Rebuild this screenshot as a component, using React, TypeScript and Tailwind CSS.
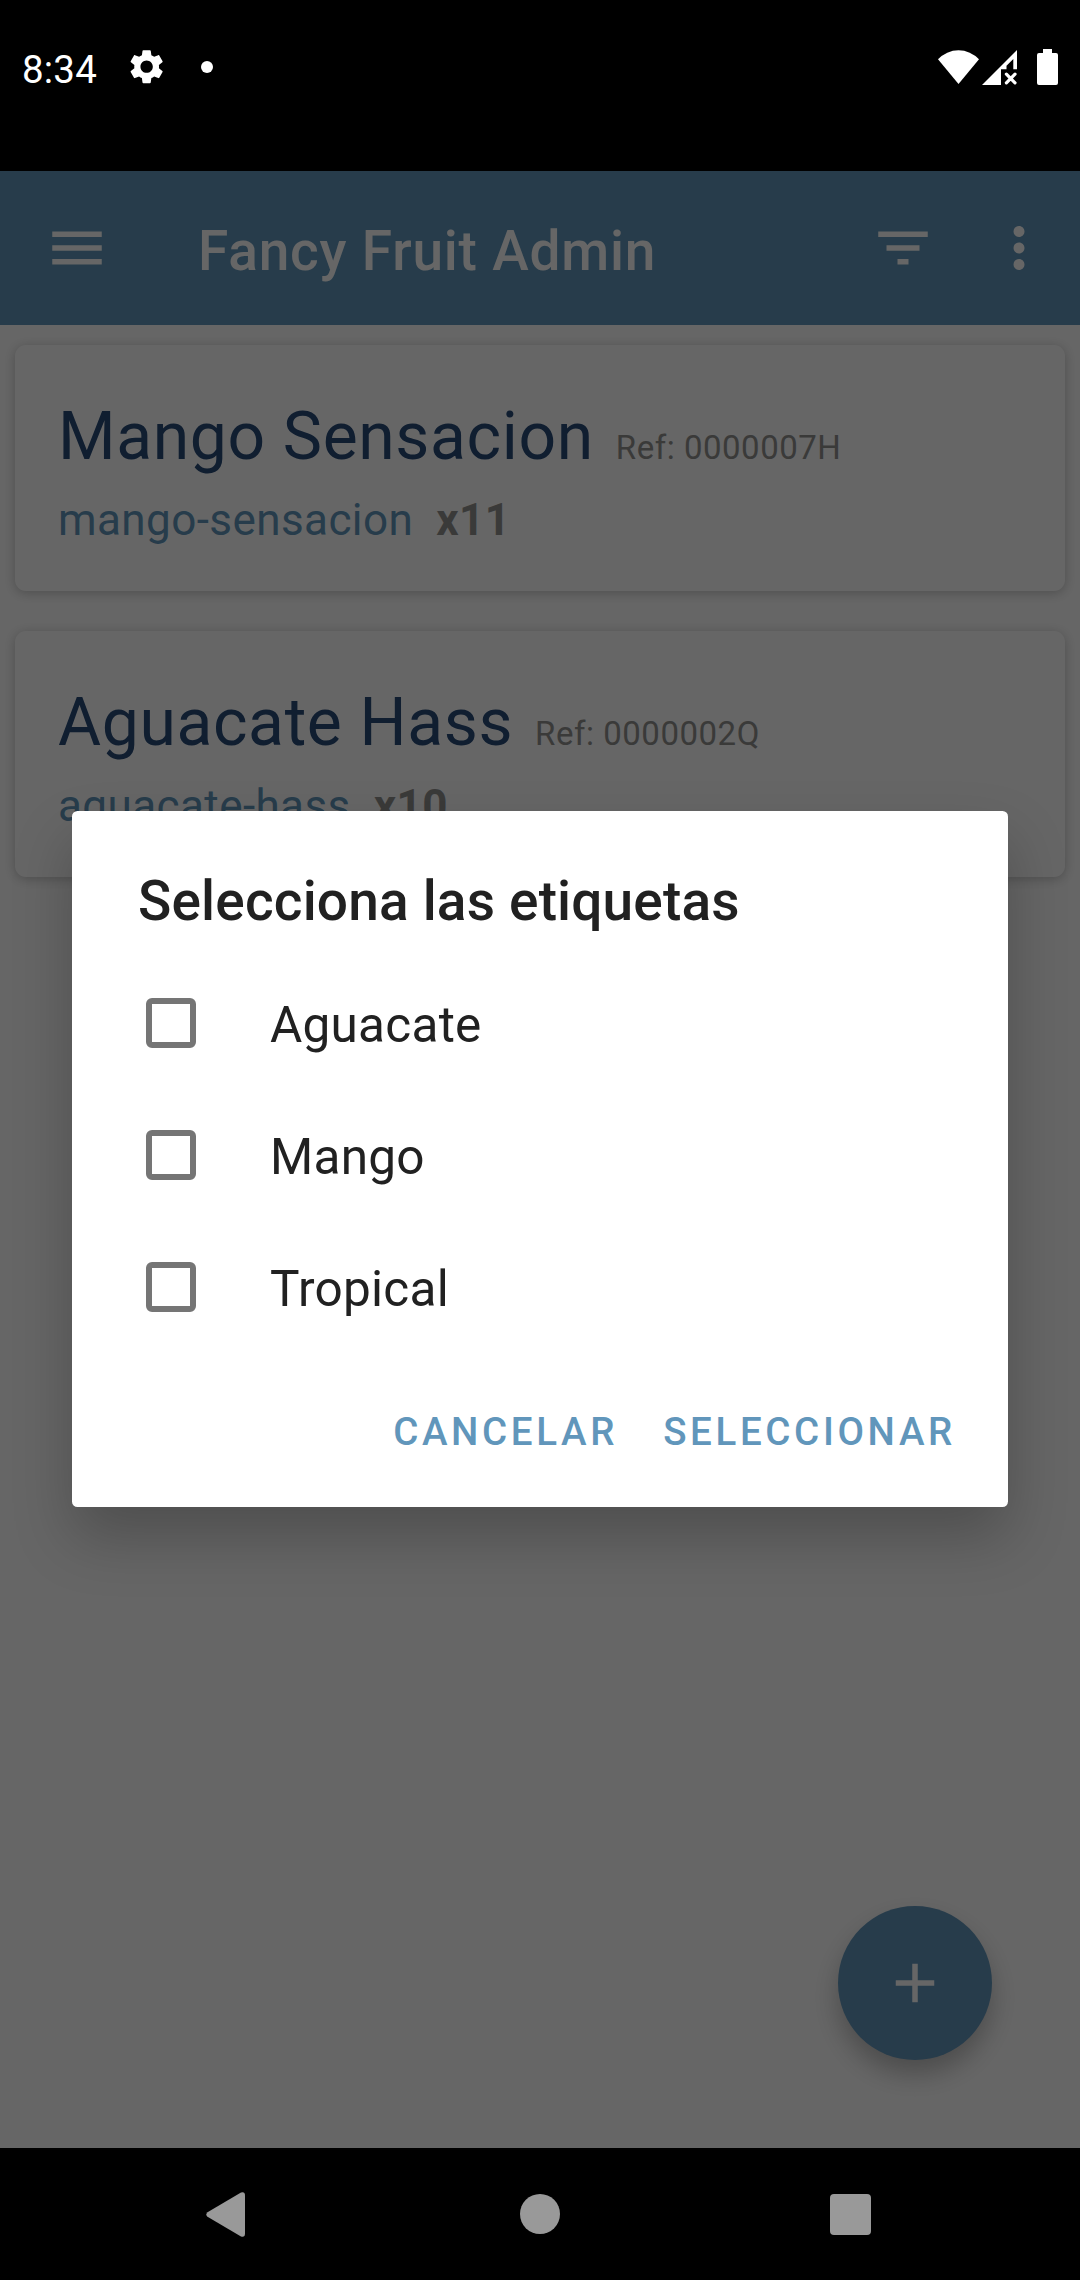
import React from "react";

type Product = { name: string; reference: string; slug: string; quantity: number };

const products: Product[] = [
  { name: "Mango Sensacion", reference: "0000007H", slug: "mango-sensacion", quantity: 11 },
  { name: "Aguacate Hass", reference: "0000002Q", slug: "aguacate-hass", quantity: 10 },
];

const tags = ["Aguacate", "Mango", "Tropical"];

function StatusBar() {
  return (
    <header className="flex h-[171px] shrink-0 items-start justify-between bg-black pr-[22px] pl-[22px] pt-[46px] text-white">
      <div className="flex h-[42px] items-center">
        <span className="mt-[5px] text-[38.5px] leading-[42px] tracking-[0.2px]">8:34</span>
        <svg className="ml-[29px] size-[41.25px]" viewBox="0 0 24 24" fill="currentColor">
          <path d="M19.14 12.94c.04-.3.06-.61.06-.94 0-.32-.02-.64-.07-.94l2.03-1.58c.18-.14.23-.41.12-.61l-1.92-3.32c-.12-.22-.37-.29-.59-.22l-2.39.96c-.5-.38-1.03-.7-1.62-.94l-.36-2.54c-.04-.24-.24-.41-.48-.41h-3.84c-.24 0-.43.17-.47.41l-.36 2.54c-.59.24-1.13.57-1.62.94l-2.39-.96c-.22-.08-.47 0-.59.22L2.74 8.87c-.12.21-.08.47.12.61l2.03 1.58c-.05.3-.09.63-.09.94s.02.64.07.94l-2.03 1.58c-.18.14-.23.41-.12.61l1.92 3.32c.12.22.37.29.59.22l2.39-.96c.5.38 1.03.7 1.62.94l.36 2.54c.05.24.24.41.48.41h3.84c.24 0 .44-.17.47-.41l.36-2.54c.59-.24 1.13-.56 1.62-.94l2.39.96c.22.08.47 0 .59-.22l1.92-3.32c.12-.22.07-.47-.12-.61l-2.01-1.58zM12 15.6c-1.98 0-3.6-1.62-3.6-3.6s1.62-3.6 3.6-3.6 3.6 1.62 3.6 3.6-1.62 3.6-3.6 3.6z" />
        </svg>
        <span className="ml-[34px] size-3 rounded-full bg-white" />
      </div>
      <div className="flex items-end pt-[3px]">
        <svg className="mb-px h-[34px] w-[41px]" viewBox="0 0 41 34" fill="currentColor">
          <path d="M0 9.3A28 28 0 0 1 41 9.3L20.5 34Z" />
        </svg>
        <svg className="ml-[3px] h-[35px] w-[35px]" viewBox="0 0 35 35" fill="currentColor">
          <path d="M0 35L35 0V19.3H31.3V9L24.5 15.8V19.3H19V35Z" />
          <path d="M24.4 24.2l8.6 8.6M33 24.2l-8.6 8.6" fill="none" stroke="currentColor" strokeWidth="3.2" strokeLinecap="round" />
        </svg>
        <svg className="ml-5 h-9 w-[21px]" viewBox="0 0 21 36" fill="currentColor">
          <path d="M6 0H15V4H19Q21 4 21 6V34Q21 36 19 36H2Q0 36 0 34V6Q0 4 2 4H6Z" />
        </svg>
      </div>
    </header>
  );
}

function AppBar() {
  return (
    <div className="flex h-[154px] shrink-0 items-center bg-[#6196bb] pl-11 pr-7 text-white">
      <svg className="size-[66px]" viewBox="0 0 24 24" fill="currentColor">
        <path d="M3 18h18v-2H3v2zm0-5h18v-2H3v2zm0-7v2h18V6H3z" />
      </svg>
      <h1 className="ml-[88px] flex-1 pt-[5px] text-[55px] leading-[64px] font-medium tracking-[0.8px]">Fancy Fruit Admin</h1>
      <svg className="size-[66px]" viewBox="0 0 24 24" fill="currentColor">
        <path d="M10 18h4v-2h-4v2zM3 6v2h18V6H3zm3 7h12v-2H6v2z" />
      </svg>
      <svg className="ml-[50px] size-[66px]" viewBox="0 0 24 24" fill="currentColor">
        <path d="M12 8c1.1 0 2-.9 2-2s-.9-2-2-2-2 .9-2 2 .9 2 2 2zm0 2c-1.1 0-2 .9-2 2s.9 2 2 2 2-.9 2-2-.9-2-2-2zm0 6c-1.1 0-2 .9-2 2s.9 2 2 2 2-.9 2-2-.9-2-2-2z" />
      </svg>
    </div>
  );
}

function ProductCard({ product }: { product: Product }) {
  return (
    <article className="flex h-[246px] flex-col rounded-[11px] bg-white pl-[43px] pt-[53px] shadow-[0_2px_12px_rgba(0,0,0,0.24)]">
      <div className="flex h-[78px] items-baseline gap-[22px]">
        <h2 className="text-[66px] leading-[78px] tracking-[0.63px] text-[#284b78]">{product.name}</h2>
        <span className="text-[33px] leading-none tracking-[0.52px] text-[#929290]">Ref: {product.reference}</span>
      </div>
      <div className="mt-[18px] flex items-baseline gap-[23px] text-[44px] leading-[52px] tracking-[0.42px]">
        <span className="text-[#6196bb]">{product.slug}</span>
        <span className="font-bold text-[#929290]">x{product.quantity}</span>
      </div>
    </article>
  );
}

function TagDialog() {
  return (
    <div role="dialog" className="flex h-[696px] w-[936px] flex-col rounded-[5.5px] bg-white pt-[58px] text-[#212121] shadow-[0_30px_60px_rgba(0,0,0,0.23)]">
      <h2 className="pl-[66px] text-[55px] leading-[64px] font-medium tracking-[0.17px]">Selecciona las etiquetas</h2>
      <ul className="mt-6">
        {tags.map((tag) => (
          <li key={tag} className="flex h-33 items-center pl-[74px]">
            <span className="size-[50px] rounded-[6px] border-[6px] border-[#757575]" />
            <span className="ml-[74px] pt-1 text-[49.5px] leading-[58px] tracking-[0.25px]">{tag}</span>
          </li>
        ))}
      </ul>
      <div className="flex flex-1 items-center justify-end gap-[45px] pr-[52px] pt-1 text-[38.5px] leading-[46px] font-medium tracking-[3.65px] text-[#6196bb]">
        <button>CANCELAR</button>
        <button>SELECCIONAR</button>
      </div>
    </div>
  );
}

function NavigationBar() {
  return (
    <nav className="flex h-33 shrink-0 items-center bg-black text-[#999]">
      <svg className="ml-[206px] mt-px h-[45px] w-[39px]" viewBox="0 0 39 45" fill="currentColor">
        <path d="M35 .6Q39 -.6 39 3.5V41.5Q39 45.6 35 44.4L1.5 24.8Q-.9 22.5 1.5 20.2Z" />
      </svg>
      <span className="ml-[275px] size-10 rounded-full bg-[#999]" />
      <span className="ml-[270px] mt-px size-[41px] rounded-[4px] bg-[#999]" />
    </nav>
  );
}

export default function App() {
  return (
    <div className="flex h-[2280px] w-[1080px] flex-col overflow-hidden bg-black font-['Roboto',sans-serif]">
      <StatusBar />
      <div className="relative flex min-h-0 flex-1 flex-col overflow-hidden">
        <AppBar />
        <main className="flex flex-1 flex-col gap-10 bg-white px-[15px] pt-5">
          {products.map((product) => (
            <ProductCard key={product.slug} product={product} />
          ))}
        </main>
        <button className="absolute right-[88px] bottom-[88px] flex size-[154px] items-center justify-center rounded-full bg-[#6196bb] text-white shadow-[0_14px_26px_rgba(0,0,0,0.26)]">
          <svg className="size-[66px]" viewBox="0 0 24 24" fill="currentColor">
            <path d="M19 13h-6v6h-2v-6H5v-2h6V5h2v6h6v2z" />
          </svg>
        </button>
        <div className="absolute inset-0 flex items-center justify-center bg-black/60 pb-px">
          <TagDialog />
        </div>
      </div>
      <NavigationBar />
    </div>
  );
}
